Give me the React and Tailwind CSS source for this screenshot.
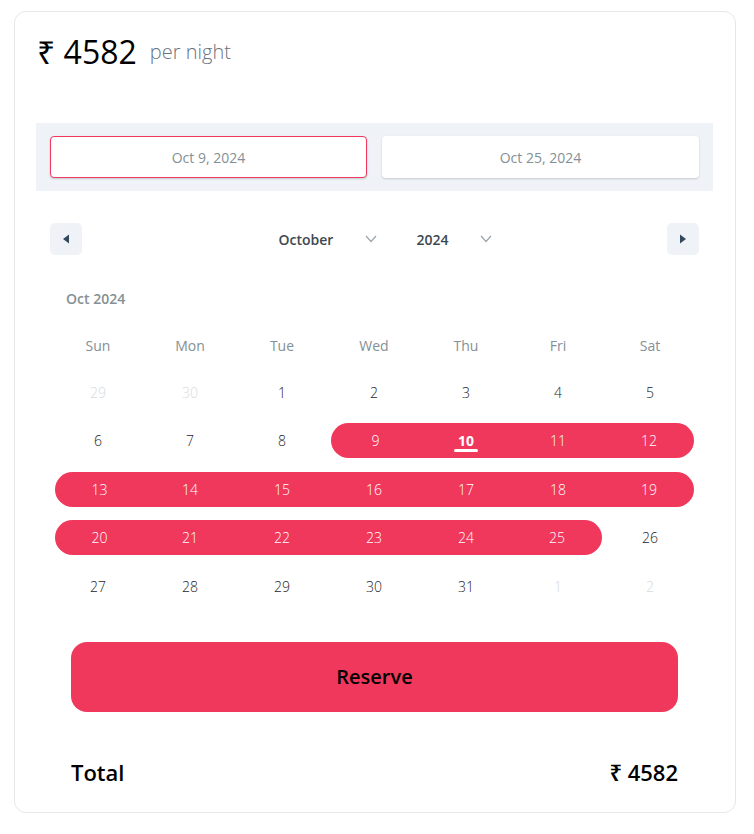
import React from "react";

const RED = "bg-[#f0385c]";

// weeks of Oct 2024, passive = outside month
const weeks = [
  [{ d: 29, p: true }, { d: 30, p: true }, { d: 1 }, { d: 2 }, { d: 3 }, { d: 4 }, { d: 5 }],
  [{ d: 6 }, { d: 7 }, { d: 8 }, { d: 9 }, { d: 10 }, { d: 11 }, { d: 12 }],
  [{ d: 13 }, { d: 14 }, { d: 15 }, { d: 16 }, { d: 17 }, { d: 18 }, { d: 19 }],
  [{ d: 20 }, { d: 21 }, { d: 22 }, { d: 23 }, { d: 24 }, { d: 25 }, { d: 26 }],
  [{ d: 27 }, { d: 28 }, { d: 29 }, { d: 30 }, { d: 31 }, { d: 1, p: true }, { d: 2, p: true }],
];

const inRange = (day) => !day.p && day.d >= 9 && day.d <= 25;

function Chevron() {
  return (
    <svg width="12" height="8" viewBox="0 0 12 8" fill="none" className="ml-[32px]">
      <polyline points="1,1 6,6.5 11,1" stroke="#9aa3ab" strokeWidth="1.2" />
    </svg>
  );
}

function DayRow({ week }) {
  return (
    <div className="grid grid-cols-7 h-[48.5px]">
      {week.map((day, i) => {
        const on = inRange(day);
        const prevOn = i > 0 && inRange(week[i - 1]);
        const nextOn = i < 6 && inRange(week[i + 1]);
        let bar = "";
        if (on) {
          bar = `${RED} ${!prevOn ? "rounded-l-full ml-[3px]" : ""} ${!nextOn ? "rounded-r-full mr-[2px]" : ""}`;
        }
        const today = day.d === 10 && !day.p;
        return (
          <div key={i} className="flex items-center">
            <div
              className={`relative w-full h-[35px] flex items-center justify-center text-[14px] ${bar} ${
                on ? "text-white" : day.p ? "text-[#d5dce0]" : "text-[#1d2429]"
              } ${today ? "font-bold" : "font-light"}`}
            >
              {day.d}
              {today && (
                <span className="absolute bottom-[6px] left-1/2 -translate-x-1/2 w-[24px] h-[3px] rounded bg-white" />
              )}
            </div>
          </div>
        );
      })}
    </div>
  );
}

export default function App() {
  return (
    <div
      className="px-[14px] pt-[11px] bg-white"
      style={{ fontFamily: '"Open Sans", "Noto Sans", "DejaVu Sans", sans-serif' }}
    >
      <div className="w-[722px] h-[802px] border border-gray-200 rounded-xl">
        {/* price header */}
        <div className="h-[111px] pt-[22px] pl-[22px] flex items-start">
          <div className="h-[36px] flex items-center gap-[13px]">
            <span className="text-[32px] leading-[36px] text-black">₹ 4582</span>
            <span className="text-[20px] font-light text-[#6b7280]">per night</span>
          </div>
        </div>

        <div className="ml-[21px] mr-[22px]">
          {/* date inputs */}
          <div className="bg-[#eff2f7] h-[68px] px-[14px] py-[13px] grid grid-cols-2 gap-[15px]">
            <div className="h-[42px] bg-white rounded-[4px] border border-[#f0385c] shadow-[0_1px_2px_rgba(35,57,66,0.21)] flex items-center justify-center text-[14px] text-[#849095]">
              Oct 9, 2024
            </div>
            <div className="h-[42px] bg-white rounded-[4px] shadow-[0_1px_2px_rgba(35,57,66,0.21)] flex items-center justify-center text-[14px] text-[#849095]">
              Oct 25, 2024
            </div>
          </div>

          {/* month / year nav */}
          <div className="mt-[32px] h-[32px] px-[14px] flex items-center justify-between">
            <button className="w-[32px] h-[32px] rounded-[5px] bg-[#eff2f7] flex items-center justify-center">
              <svg width="8" height="10" viewBox="0 0 8 10">
                <polygon points="7,0.5 1,5 7,9.5" fill="#34495e" />
              </svg>
            </button>
            <div className="flex items-center pl-[22px] text-[14px] font-semibold text-[#3e484f]">
              <span>October</span>
              <Chevron />
              <span className="ml-[39px]">2024</span>
              <Chevron />
            </div>
            <button className="w-[32px] h-[32px] rounded-[5px] bg-[#eff2f7] flex items-center justify-center">
              <svg width="8" height="10" viewBox="0 0 8 10">
                <polygon points="1,0.5 7,5 1,9.5" fill="#34495e" />
              </svg>
            </button>
          </div>

          {/* month label */}
          <div className="mt-[34px] pl-[30px] text-[14px] leading-[20px] font-semibold text-[#849095]">
            Oct 2024
          </div>

          {/* weekdays + days */}
          <div className="w-[644px] ml-[16px] mt-[14px]">
            <div className="grid grid-cols-7 h-[45px] items-center text-[14px] text-[#849095]">
              {["Sun", "Mon", "Tue", "Wed", "Thu", "Fri", "Sat"].map((w) => (
                <div key={w} className="text-center">
                  {w}
                </div>
              ))}
            </div>
            {weeks.map((w, i) => (
              <DayRow key={i} week={w} />
            ))}
          </div>
        </div>

        {/* reserve */}
        <div className="ml-[56px] mr-[57px]">
          <button
            className={`mt-[31px] w-full h-[70px] rounded-2xl ${RED} text-[20px] font-semibold text-black`}
          >
            Reserve
          </button>
          <div className="mt-[45px] flex items-center justify-between text-[22px] leading-[30px] font-semibold text-black">
            <span>Total</span>
            <span>₹ 4582</span>
          </div>
        </div>
      </div>
    </div>
  );
}
